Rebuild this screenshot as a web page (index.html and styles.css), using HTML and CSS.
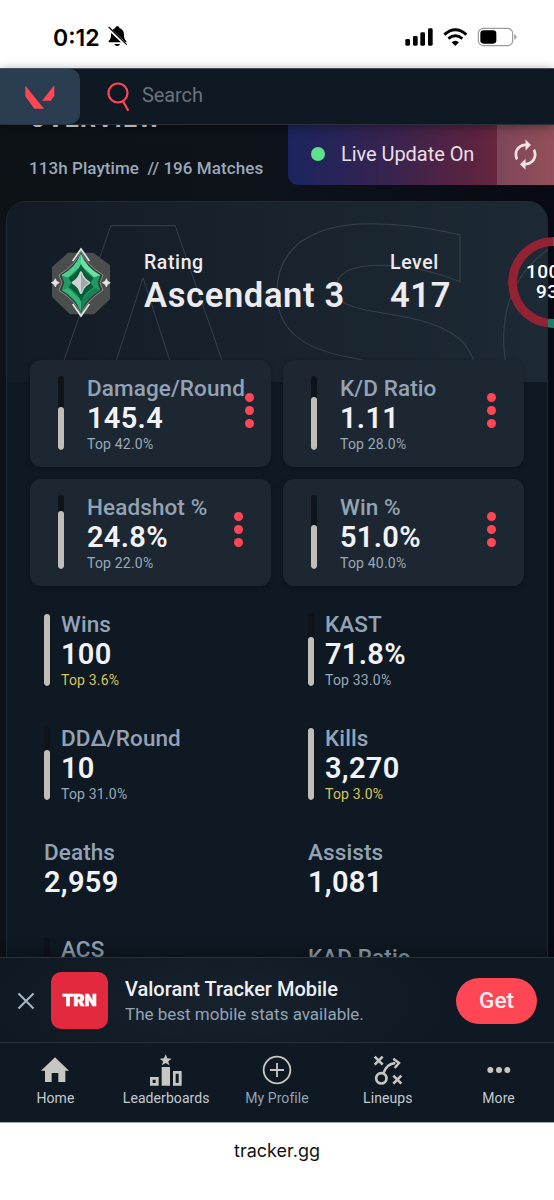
FILE: index.html
```html
<!DOCTYPE html>
<html lang="en">
<head>
<meta charset="utf-8">
<title>Valorant Tracker</title>
<link rel="stylesheet" href="styles.css">
</head>
<body>
<div class="phone">
  <div class="status">
    <span class="clock">0:12</span>
    <svg class="bell" width="22" height="24" viewBox="320 78 66 72"><path d="M351 82c4 0 6 2 6 5 9 3 14 10 14 20 0 12 3 14 7 19v4H325v-4c4-5 7-7 7-19 0-10 5-17 13-20 0-3 2-5 6-5zM342 135h17c-1 4-4 6-8 6s-8-2-9-6z"/><path d="M323 86l55 53" stroke="#fff" stroke-width="9"/><path d="M325 84l54 53" stroke="#000" stroke-width="3.6"/></svg>
    <svg class="signal" width="112" height="20" viewBox="384 80 336 60"><rect x="385" y="116" width="14" height="20" rx="4"/><rect x="408" y="107" width="14" height="29" rx="4"/><rect x="430" y="96" width="14" height="40" rx="4"/><rect x="453" y="84" width="14" height="52" rx="4"/><g fill="none" stroke="#000" stroke-width="8.500"><path d="M502 103q33-29 66 0"/><path d="M514 115q21-17 42 0"/></g><path d="M524 126q11-9 22 0l-11 11z"/><rect x="604" y="84" width="103" height="52" rx="15" fill="none" stroke="#9a9a9a" stroke-width="3.500"/><rect x="610" y="90" width="48" height="40" rx="10"/><path d="M712 102q7 3 7 8t-7 8z" fill="#9a9a9a"/></svg>
  </div>

  <header class="topbar">
    <div class="brand"><svg width="30" height="24" viewBox="75 255 90 72"><path d="M76 257v32l27 37h29zM163 256v31l-11 15h-26z" fill="#ff4655"/></svg></div>
    <svg class="lens" width="24" height="30" viewBox="321 245 72 90" fill="none" stroke="#ff4655" stroke-width="6.500"><circle cx="354" cy="278" r="28.500"/><path d="M369 303l16 28"/></svg>
    <span class="search">Search</span>
  </header>

  <main class="view">
    <div class="intro">
      <div class="intro-text">
        <h1>OVERVIEW</h1>
        <p>113h Playtime&nbsp; // 196 Matches</p>
      </div>
      <div class="live">
        <i class="live-dot"></i><span class="live-label">Live Update On</span>
        <span class="refresh"><svg width="33" height="33" viewBox="0 0 24 24" fill="#eee3e4"><path d="M12 6v3l4-4-4-4v3c-4.420 0-8 3.580-8 8 0 1.570.46 3.030 1.240 4.260L6.700 14.800c-.45-.83-.7-1.790-.7-2.800 0-3.310 2.690-6 6-6zm6.760 1.740L17.300 9.200c.44.84.7 1.790.7 2.800 0 3.310-2.690 6-6 6v-3l-4 4 4 4v-3c4.420 0 8-3.580 8-8 0-1.570-.46-3.030-1.240-4.260z"/></svg></span>
      </div>
    </div>

    <section class="card">
      <div class="hero">
        <svg class="ghost" width="541" height="180" viewBox="7 202 541 180"><g class="ghost-text"><text x="32" y="448" textLength="222" lengthAdjust="spacingAndGlyphs">A</text><text x="252" y="450" textLength="250" lengthAdjust="spacingAndGlyphs">S</text><text x="486" y="450" textLength="260" lengthAdjust="spacingAndGlyphs">C</text></g></svg>
        <svg class="badge" width="60" height="72" viewBox="153 170 180 216">
          <path d="M205 187h75l50 38v102l-48 45h-72l-54-52v-90z" fill="#4c4e4e"/>
          <path d="M243 182q14 40 66 72l-9 23 9 23q-52 32-66 72-14-40-66-72l9-23-9-23q52-32 66-72z" fill="#353c3b" stroke="#89908d" stroke-width="3"/>
          <path d="M243 190q14 40 58 65l-8 22 8 22q-44 25-58 65-14-40-58-65l8-22-8-22q44-25 58-65z" fill="#1f9a62"/>
          <path d="M243 190q14 40 58 65l-19 6-39-36-39 36-19-6q44-25 58-65z" fill="#6ce0a5"/>
          <path d="M243 190v35l-39 36-19-6q44-25 58-65z" fill="#4ccc8d"/>
          <path d="M185 299l19-6 39 36 39-36 19 6q-44 25-58 65-14-40-58-65z" fill="#168052"/>
          <path d="M243 364v-35l-39-36-19 6q44 25 58 65z" fill="#34b477"/>
          <path d="M243 221q10 24 37 42l-8 14 8 14q-27 18-37 42-10-24-37-42l8-14-8-14q27-18 37-42z" fill="#075c3a"/>
          <path d="M243 247q6 20 24 30-18 10-24 30-6-20-24-30 18-10 24-30z" fill="#d0d3d2" stroke="#d0d3d2" stroke-width="8" stroke-linejoin="round"/>
          <path d="M243 247q6 20 24 30-18 10-24 30z" fill="#a3a7a8"/>
          <path d="M218 212l25-36 25 36M218 341l25 36 25-36" fill="none" stroke="#dcebe4" stroke-width="5"/>
          <path d="M166 265l4 8 8 4-8 5-4 8-4-8-8-5 8-4zM319 265l4 8 8 4-8 5-4 8-4-8-8-5 8-4z" fill="#e5e7e7" stroke="#e5e7e7" stroke-width="2"/>
        </svg>
        <div class="rank"><span class="cap">Rating</span><strong>Ascendant 3</strong></div>
        <div class="level"><span class="cap">Level</span><strong>417</strong></div>
        <div class="ring"><span>100W</span><span>93L</span></div>
      </div>

      <div class="tiles">
        <div class="tile"><i class="bar"><b style="height:58%"></b></i><div class="stat"><span>Damage/Round</span><strong>145.4</strong><small>Top 42.0%</small></div><div class="dots"><i></i><i></i><i></i></div></div>
        <div class="tile"><i class="bar"><b style="height:72%"></b></i><div class="stat"><span>K/D Ratio</span><strong>1.11</strong><small>Top 28.0%</small></div><div class="dots"><i></i><i></i><i></i></div></div>
        <div class="tile"><i class="bar"><b style="height:78%"></b></i><div class="stat"><span>Headshot %</span><strong>24.8%</strong><small>Top 22.0%</small></div><div class="dots"><i></i><i></i><i></i></div></div>
        <div class="tile"><i class="bar"><b style="height:60%"></b></i><div class="stat"><span>Win %</span><strong>51.0%</strong><small>Top 40.0%</small></div><div class="dots"><i></i><i></i><i></i></div></div>
      </div>

      <div class="list">
        <div class="row"><i class="bar"><b style="height:98%"></b></i><div class="stat"><span>Wins</span><strong>100</strong><small class="gold">Top 3.6%</small></div></div>
        <div class="row"><i class="bar"><b style="height:67%"></b></i><div class="stat"><span>KAST</span><strong>71.8%</strong><small>Top 33.0%</small></div></div>
        <div class="row"><i class="bar"><b style="height:69%"></b></i><div class="stat"><span>DDΔ/Round</span><strong>10</strong><small>Top 31.0%</small></div></div>
        <div class="row"><i class="bar"><b style="height:98%"></b></i><div class="stat"><span>Kills</span><strong>3,270</strong><small class="gold">Top 3.0%</small></div></div>
        <div class="row"><div class="stat"><span>Deaths</span><strong>2,959</strong></div></div>
        <div class="row"><div class="stat"><span>Assists</span><strong>1,081</strong></div></div>
        <div class="row"><i class="bar"></i><div class="stat"><span>ACS</span></div></div>
        <div class="row plain"><div class="stat"><span>KAD Ratio</span></div></div>
      </div>
    </section>
  </main>

  <aside class="promo">
    <svg class="close" width="18" height="18" viewBox="0 0 18 18" stroke="#a9b8c7" stroke-width="2"><path d="M1.500 1.500l15 15M16.500 1.500l-15 15"/></svg>
    <div class="app"><span>TRN</span></div>
    <div class="pitch"><b>Valorant Tracker Mobile</b><span>The best mobile stats available.</span></div>
    <button class="get">Get</button>
  </aside>

  <nav class="tabs">
    <a class="tab"><svg width="32" height="32" viewBox="118 72 96 96"><path d="M166 82l42 40h-11v34h-21v-27h-20v27h-20v-34h-12z"/></svg><span>Home</span></a>
    <a class="tab"><svg width="34" height="32" viewBox="448 72 102 96"><path d="M498 73l5 12 13 1-10 8 3 12-11-7-11 7 3-12-10-8 13-1zM486 111h25v56h-25zM451 141h26v26h-26zM459 149v10h9v-10zM520 123h26v44h-26zM528 131v28h9v-28z" fill-rule="evenodd"/></svg><span>Leaderboards</span></a>
    <a class="tab me"><svg width="32" height="32" viewBox="-48 72 96 96" fill="none" stroke="#c8c6c2" stroke-width="5.500"><circle cx="0" cy="120" r="40"/><path d="M-21 120h42M0 99v42"/></svg><span>My Profile</span></a>
    <a class="tab"><svg width="32" height="32" viewBox="284 72 96 96" fill="none" stroke="#c8c6c2" stroke-width="8"><path d="M292 80l24 24M316 80l-24 24M348 137l24 24M372 137l-24 24"/><circle cx="312" cy="145" r="15.500"/><path d="M318 130q9-28 36-31"/><path d="M348 86l17 13-13 15" stroke-width="7.500"/></svg><span>Lineups</span></a>
    <a class="tab"><svg width="32" height="32" viewBox="617 72 96 96"><circle cx="639" cy="120" r="9"/><circle cx="665" cy="120" r="9"/><circle cx="690" cy="120" r="9"/></svg><span>More</span></a>
  </nav>

  <footer class="domain">tracker.gg</footer>
</div>
</body>
</html>
```
FILE: styles.css
```css
* { box-sizing: border-box; }
body { margin: 0; background: #fff; font-family: Roboto, "Liberation Sans", sans-serif; }
h1, p { margin: 0; }
svg { flex: none; display: block; }

.phone { width: 554px; height: 1200px; display: flex; flex-direction: column; overflow: hidden; }

.status { height: 68px; flex: none; display: flex; align-items: center; padding: 6px 37px 0 53px; font-family: Inter, sans-serif; }
.clock { font-size: 23px; line-height: 28px; font-weight: 600; letter-spacing: 0; width: 54px; padding-top: 1px; }
.signal { margin-left: auto; }

.topbar { height: 57px; flex: none; display: flex; align-items: center; background: #0f1923; border-top: 1px solid #46515c; border-bottom: 1px solid #26313b; position: relative; z-index: 2; box-shadow: 0 2px 10px rgba(0, 0, 0, .4); }
.brand { width: 80px; height: 55px; background: #2b3d50; border-radius: 0 10px 10px 0; display: flex; align-items: center; padding-left: 25px; }
.lens { margin-left: 27px; margin-right: 11px; }
.search { font-size: 20px; letter-spacing: -0.100px; color: #68737d; padding-bottom: 3px; }

.view { height: 832px; flex: none; overflow: hidden; background: linear-gradient(90deg, #0d1217, #0e121a 50%, #070a13); }
.intro { height: 76px; display: flex; }
.intro-text { width: 288px; padding-left: 29px; flex: none; }
.intro h1 { font-size: 25px; line-height: 30px; height: 9px; margin-top: -21px; margin-bottom: 45px; letter-spacing: 1.200px; color: #e4e6e8; }
.intro p { font-size: 17px; line-height: 20px; font-weight: 500; letter-spacing: 0.070px; color: #9aa9b9; white-space: nowrap; }
.live { width: 266px; height: 60px; flex: none; display: flex; align-items: center; border-radius: 0 0 0 10px; overflow: hidden; background: linear-gradient(90deg, #1a255f 0%, #38234f 38%, #5c2340 70%, #82303d 100%); color: #eadfe7; }
.live-dot { width: 14px; height: 14px; border-radius: 50%; background: #5fe08c; margin: 0 16px 2px 23px; }
.live-label { font-size: 20px; width: 156px; white-space: nowrap; padding-bottom: 2px; letter-spacing: -0.050px; }
.refresh { width: 57px; height: 60px; background: rgba(255, 255, 255, .15); display: flex; align-items: center; padding: 0 0 2px 12px; }

.card { width: 542px; height: 900px; margin-left: 6px; border: 1px solid #1c2a34; border-radius: 20px; background: #0f1923; }
.hero { height: 180px; border-radius: 19px 19px 0 0; background: linear-gradient(90deg, #131c26, #18232d 50%, #1d2934); display: flex; position: relative; padding: 44px 0 0 44px; }
.ghost { position: absolute; left: 0; top: 0; }
.ghost-text { font: bold 305px "DejaVu Sans", sans-serif; fill: none; stroke: #36414b; stroke-width: 1; }
.badge, .rank, .level, .ring { position: relative; flex: none; }
.hero .badge { margin-top: 1px; }
.rank { width: 246px; margin-left: 33px; }
.hero .rank, .hero .level { display: flex; flex-direction: column; color: #ecebf0; padding-top: 6px; white-space: nowrap; }
.cap { font-size: 19.500px; line-height: 22px; font-weight: 500; letter-spacing: 0.600px; }
.hero strong { font-size: 34.500px; line-height: 42px; font-weight: 600; letter-spacing: 0.650px; }
.level { width: 118px; }
.ring { width: 91px; height: 91px; margin-top: -9px; border-radius: 50%; padding: 25px 0 0 18px; font-size: 19px; line-height: 20px; font-weight: 500; color: #fff; letter-spacing: 0.400px; }
.ring::before { content: ""; position: absolute; inset: 0; border-radius: 50%; background: conic-gradient(#17826a 52.1%, #932234 52.1%); -webkit-mask: radial-gradient(circle, transparent 36px, #000 37px); mask: radial-gradient(circle, transparent 36px, #000 37px); }
.ring span { display: block; }
.ring span + span { padding-left: 10px; }

.tiles { position: relative; display: grid; grid-template-columns: 241px 241px; grid-auto-rows: 107px; gap: 12px; margin: -22px 0 0 23px; }
.tile { display: flex; align-items: center; background: #1c2732; border-radius: 11px; padding: 0 28px; box-shadow: 0 1px 5px rgba(0, 0, 0, .25); }
.bar { width: 6px; height: 74px; flex: none; border-radius: 3px; background: #0f131a; display: flex; align-items: flex-end; overflow: hidden; }
.bar b { width: 6px; border-radius: 3px; background: #c2bdb7; }
.stat { display: flex; flex-direction: column; flex: none; white-space: nowrap; }
.stat span { font-size: 22.500px; line-height: 27px; font-weight: 500; color: #93a3b5; letter-spacing: 0.100px; }
.stat strong { font-size: 29px; line-height: 32px; font-weight: 600; color: #f2f3f7; letter-spacing: 0.300px; }
.stat small { font-size: 14px; line-height: 18px; font-weight: 400; color: #9aa9ba; letter-spacing: 0.200px; padding-top: 1px; }
.stat small.gold { color: #d6c75c; }
.tile .bar { margin-bottom: 1px; }
.tile .stat { margin-left: 23px; }
.dots { margin: 0 0 6px auto; display: flex; flex-direction: column; gap: 4px; }
.dots i { width: 9px; height: 9px; border-radius: 50%; background: #ff4655; }

.list { display: grid; grid-template-columns: 264px 240px; grid-template-rows: 114px 114px 97px 100px; padding: 25px 0 0 37px; }
.row { display: flex; align-items: flex-start; }
.row .bar { height: 73px; margin: 2px 11px 0 0; }
.plain { padding-top: 8px; }

.promo { height: 85px; flex: none; position: relative; z-index: 1; display: flex; align-items: center; padding: 1px 17px 0; background: radial-gradient(ellipse 230px 80px at 220px 45px, #17222c, #0f1923); border-top: 1px solid #27323c; box-shadow: 0 -3px 14px rgba(0, 0, 0, .4); }
.app { width: 57px; height: 57px; margin: 0 17px 0 16px; border-radius: 10px; background: #e3293e; color: #fff; display: flex; align-items: center; justify-content: center; }
.app span { font-size: 16px; font-weight: 900; letter-spacing: -0.300px; transform: scaleX(1.100); -webkit-text-stroke: 0.600px #fff; }
.pitch { display: flex; flex-direction: column; white-space: nowrap; padding-top: 1px; }
.pitch b { font-size: 20px; line-height: 25px; font-weight: 500; color: #eef0f3; }
.pitch span { font-size: 17px; line-height: 24px; color: #93a3b5; }
.get { margin-left: auto; width: 81px; height: 46px; border: 0; border-radius: 23px; background: #ff4655; color: #fbeef0; font: 500 22.500px Roboto, sans-serif; padding: 0 0 2px; }

.tabs { height: 81px; flex: none; position: relative; z-index: 2; display: grid; grid-template-columns: repeat(5, 1fr); background: #0f1923; border-top: 1px solid #27323c; border-bottom: 1px solid #9ca6ae; }
.tab { display: flex; flex-direction: column; align-items: center; padding-top: 11px; fill: #c8c6c2; color: #c3cad0; font-size: 14px; line-height: 24px; letter-spacing: 0.080px; }
.me { color: #93a3b5; }

.domain { padding-top: 15px; text-align: center; font-family: Inter, sans-serif; font-size: 18px; line-height: 26px; color: #111; }
```
